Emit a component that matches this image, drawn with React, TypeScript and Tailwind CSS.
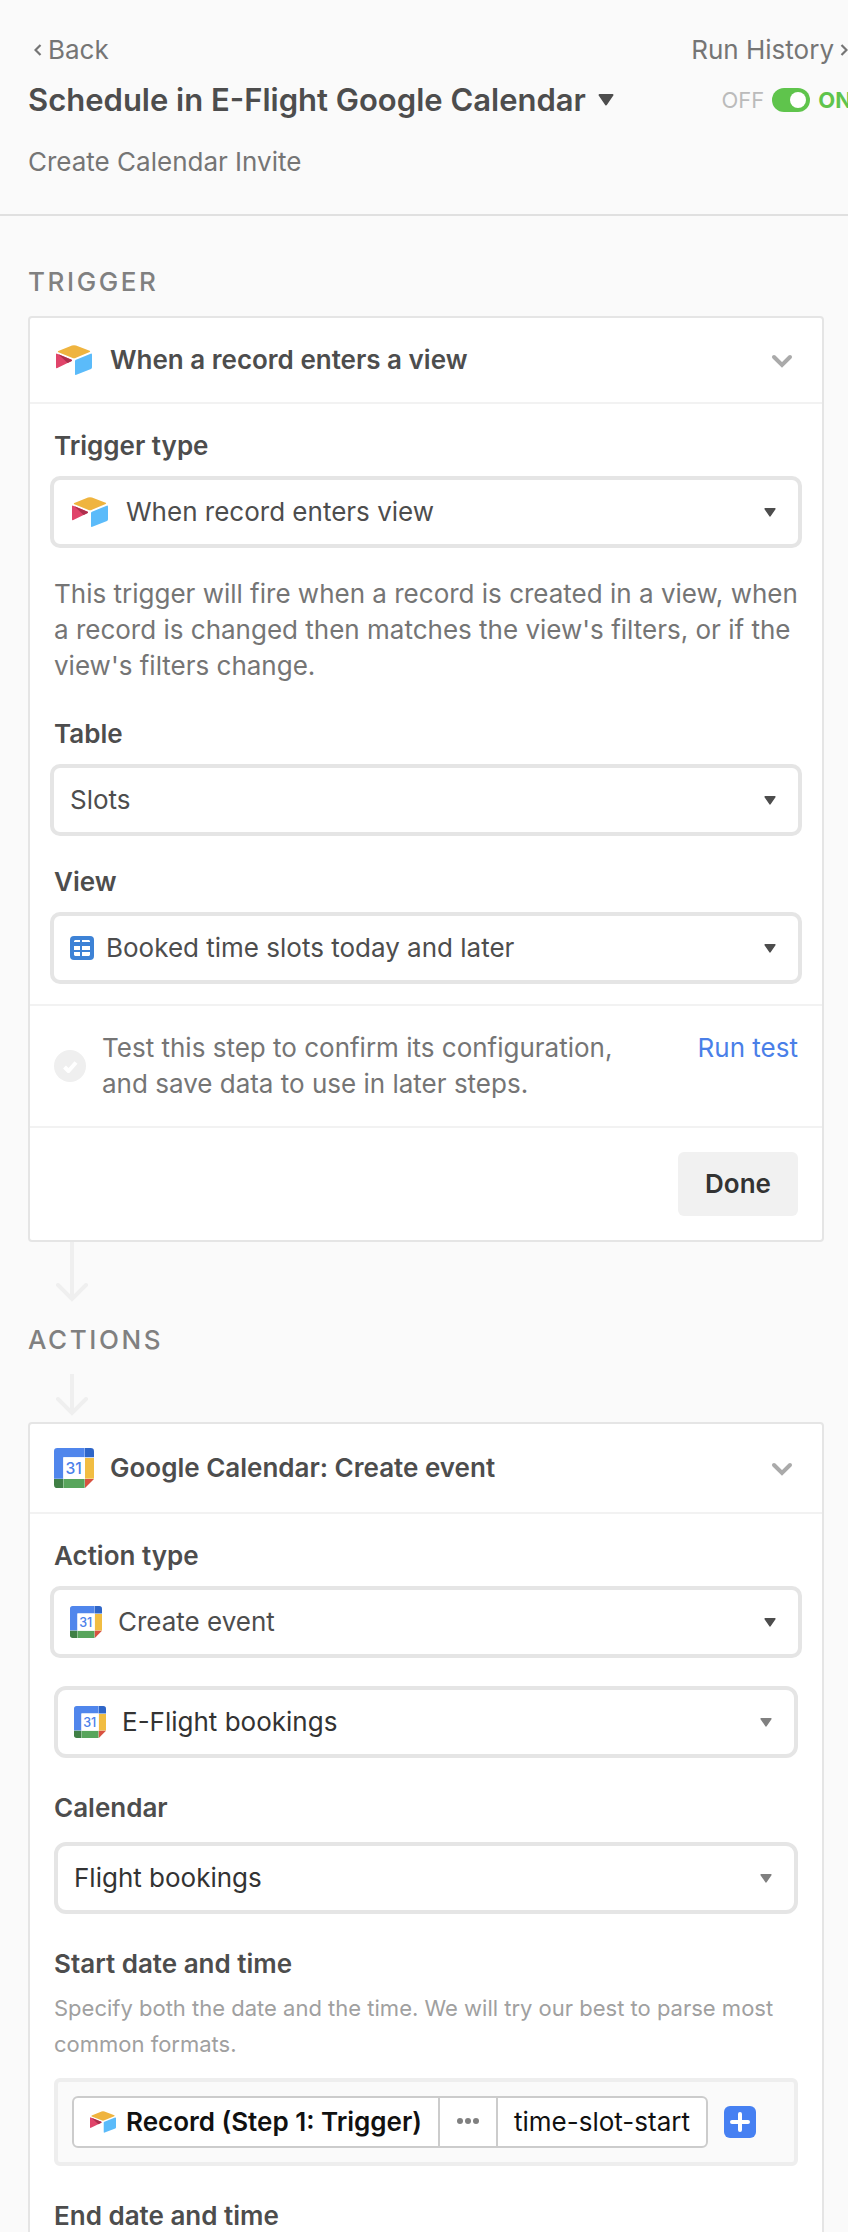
import { useState, type ReactNode } from 'react';
import clsx from 'clsx';

const AirtableIcon = ({ className }: { className?: string }) => (
  <svg viewBox="0 0 108 90" className={className} aria-hidden="true">
    <path d="M7 18 48 1.500Q54 -.5 60 1.500L101 17Q104 19 101 21L60 38Q54 41 48 38L7 22Q4 20 7 18Z" fill="#efb43f" />
    <path d="M0 28Q0 25 3 26L47 44Q49 46 47 48L4 69Q0 71 0 67Z" fill="#e0446a" />
    <path d="M6 27 47 44Q49 46 47 48L35 54Z" fill="#ad2f4d" />
    <path d="M57 48Q57 45 60 44L104 26Q108 25 108 29V67Q108 71 105 72L61 89Q57 91 57 87Z" fill="#5bbbfa" />
  </svg>
);

const CalendarIcon = ({ className }: { className?: string }) => (
  <svg viewBox="0 0 120 120" className={className} aria-hidden="true">
    <path d="M10 0H92V28H28V92H0V10Q0 0 10 0Z" fill="#5086ec" />
    <path d="M93 0H110Q120 0 120 10V28H93Z" fill="#2f66c8" />
    <path d="M93 30H120V92H93Z" fill="#f1bd42" />
    <path d="M28 93H92V120H28Z" fill="#58a55c" />
    <path d="M0 93H27V120H10Q0 120 0 110Z" fill="#3f7f45" />
    <path d="M93 93H120L93 120Z" fill="#d85140" />
    <path d="M28 28H92V92H28Z" fill="#fff" />
    <text x="59" y="78" textAnchor="middle" fontFamily="Inter, sans-serif" fontSize="47" fontWeight="500" fill="#4a80ea">
      31
    </text>
  </svg>
);

const GridIcon = ({ className }: { className?: string }) => (
  <svg viewBox="0 0 24 24" className={className} aria-hidden="true">
    <rect width="24" height="24" rx="4" fill="#3d82d6" />
    <path d="M5 4h5v2H4V5zM12 4h7l1 1v1h-8zM4 10h6v4H4zM12 10h8v4h-8zM4 16h6v4H5l-1-1zM12 16h8v3l-1 1h-7z" fill="#fff" />
  </svg>
);

const Caret = ({ className }: { className?: string }) => (
  <svg viewBox="0 0 16 12" className={className} aria-hidden="true">
    <path d="M1.500 1H14.500L8 10.500Z" fill="currentColor" stroke="currentColor" strokeWidth="2" strokeLinejoin="round" />
  </svg>
);

const SmallChevron = ({ className }: { className?: string }) => (
  <svg viewBox="0 0 8 12" className={className} fill="none" stroke="currentColor" strokeWidth="2.2" aria-hidden="true">
    <path d="M1.500 1 6.500 6 1.500 11" />
  </svg>
);

const FlowArrow = ({ height }: { height: number }) => (
  <svg
    width="32"
    height={height}
    viewBox={`0 0 32 ${height}`}
    className="ml-7 block"
    fill="none"
    stroke="#efefef"
    strokeWidth="4"
    aria-hidden="true"
  >
    <path d={`M16 0V${height - 3}`} />
    <path d={`M2 ${height - 17} 16 ${height - 3} 30 ${height - 17}`} strokeLinecap="round" />
  </svg>
);

interface SelectProps {
  id: string;
  value: string;
  icon?: ReactNode;
  tight?: boolean;
  nested?: boolean;
  label?: string;
}

const Select = ({ id, value, icon, tight, nested, label }: SelectProps) => (
  <div
    className={clsx(
      'flex h-18 items-center border-4 border-[#e5e5e5] bg-white pl-4 pr-[22px]',
      nested ? 'rounded-xl text-[#333]' : '-mx-1 rounded-[10px] text-[#4d4d4d]',
      tight ? 'gap-3' : 'gap-4'
    )}
  >
    {icon}
    <select id={id} aria-label={label} className="h-full min-w-0 flex-1 appearance-none bg-transparent outline-none">
      <option>{value}</option>
    </select>
    <Caret className={clsx('h-[9px] w-3 shrink-0', nested ? 'text-[#808080]' : 'text-[#4d4d4d]')} />
  </div>
);

const FieldLabel = ({ htmlFor, children }: { htmlFor: string; children: ReactNode }) => (
  <label htmlFor={htmlFor} className="block font-semibold text-[#4d4d4d]">
    {children}
  </label>
);

const StepHeader = ({ icon, title }: { icon: ReactNode; title: string }) => (
  <div className="flex items-center border-b-2 border-[#f2f2f2] p-6">
    {icon}
    <h3 className="ml-4 flex-1 font-semibold text-[#4d4d4d]">{title}</h3>
    <button type="button" aria-label={`Collapse ${title}`}>
      <svg viewBox="0 0 32 32" className="size-8" fill="none" stroke="#aaa" strokeWidth="4" strokeLinecap="round" aria-hidden="true">
        <path d="M8 13 16 21 24 13" />
      </svg>
    </button>
  </div>
);

const SectionTitle = ({ children }: { children: ReactNode }) => (
  <h2 className="font-medium tracking-widest text-[#808080]">{children}</h2>
);

const App = () => {
  const [enabled, setEnabled] = useState(true);

  return (
    <div className="h-screen overflow-hidden bg-[#fafafa] font-['Inter',sans-serif] text-[26px] leading-9 text-[#757575]">
      <header className="border-b-2 border-[#e0e0e0] pb-[34px] pl-7 pt-8">
        <div className="flex items-center justify-between">
          <a href="#back" className="flex items-center gap-1.5 pl-1.5">
            <SmallChevron className="h-3 w-2 rotate-180" />
            Back
          </a>
          <a href="#history" className="flex items-center gap-1.5">
            Run History
            <SmallChevron className="h-3 w-2" />
          </a>
        </div>
        <div className="-mr-1 mt-3 flex h-10 items-center justify-between whitespace-nowrap">
          <button type="button" className="flex items-center gap-3 text-[31px] font-semibold text-[#4d4d4d]">
            Schedule in E-Flight Google Calendar
            <Caret className="h-3 w-4" />
          </button>
          <label className="flex items-center gap-2 text-[22px]">
            <span className="text-[#bbb]">OFF</span>
            <input
              type="checkbox"
              checked={enabled}
              onChange={(e) => setEnabled(e.target.checked)}
              className="flex h-6 w-[38px] appearance-none items-center rounded-full bg-gray-300 px-1 before:size-4 before:rounded-full before:bg-white checked:justify-end checked:bg-[#5fc44c]"
            />
            <span className="font-bold text-[#5fc44c]">ON</span>
          </label>
        </div>
        <p className="mt-6">Create Calendar Invite</p>
      </header>

      <main className="px-7 pt-12 [&>h2]:mb-4">
        <SectionTitle>TRIGGER</SectionTitle>
        <section className="-mr-1 rounded-sm border-2 border-[#e5e5e5] bg-white">
          <StepHeader icon={<AirtableIcon className="mx-0.5 my-[3px] h-[30px] w-9" />} title="When a record enters a view" />
          <div className="px-6 pb-5 pt-6">
            <FieldLabel htmlFor="trigger-type">Trigger type</FieldLabel>
            <div className="mt-3">
              <Select id="trigger-type" value="When record enters view" icon={<AirtableIcon className="mx-0.5 h-[30px] w-9" />} />
            </div>
            <p className="-mr-2 mb-8 mt-7">
              This trigger will fire when a record is created in a view, when a record is changed then matches the
              view's filters, or if the view's filters change.
            </p>
            <FieldLabel htmlFor="table">Table</FieldLabel>
            <div className="mb-7 mt-3">
              <Select id="table" value="Slots" />
            </div>
            <FieldLabel htmlFor="view">View</FieldLabel>
            <div className="mt-3">
              <Select id="view" value="Booked time slots today and later" icon={<GridIcon className="size-6" />} tight />
            </div>
          </div>
          <div className="flex items-center gap-4 border-t-2 border-[#f2f2f2] p-6">
            <svg viewBox="0 0 32 32" className="size-8 shrink-0" aria-hidden="true">
              <circle cx="16" cy="16" r="16" fill="#efefef" />
              <path d="M10.500 17 14.500 21 22 12.500" fill="none" stroke="#fff" strokeWidth="4" strokeLinejoin="round" />
            </svg>
            <p className="flex-1 pr-10">Test this step to confirm its configuration, and save data to use in later steps.</p>
            <button type="button" className="self-start text-[#4a7fe8]">
              Run test
            </button>
          </div>
          <div className="flex justify-end border-t-2 border-[#f2f2f2] p-6">
            <button type="button" className="h-16 w-[120px] rounded-md bg-[#f1f1f1] font-semibold text-[#333]">
              Done
            </button>
          </div>
        </section>

        <div className="mb-5">
          <FlowArrow height={60} />
        </div>
        <SectionTitle>ACTIONS</SectionTitle>
        <div className="mb-1.5">
          <FlowArrow height={42} />
        </div>

        <section className="-mr-1 rounded-sm border-2 border-[#e5e5e5] bg-white">
          <StepHeader icon={<CalendarIcon className="size-10" />} title="Google Calendar: Create event" />
          <div className="px-6 pb-5 pt-6">
            <FieldLabel htmlFor="action-type">Action type</FieldLabel>
            <div className="mb-7 mt-3">
              <Select id="action-type" value="Create event" icon={<CalendarIcon className="size-8" />} />
            </div>
            <Select id="account" label="Account" value="E-Flight bookings" icon={<CalendarIcon className="size-8" />} nested />
            <div className="mb-4 mt-8">
              <FieldLabel htmlFor="calendar">Calendar</FieldLabel>
            </div>
            <Select id="calendar" value="Flight bookings" nested />

            <div className="mb-2 mt-8">
              <FieldLabel htmlFor="start">Start date and time</FieldLabel>
            </div>
            <p className="mb-4 text-[22px] text-[#a0a0a0]">
              Specify both the date and the time. We will try our best to parse most common formats.
            </p>
            <div className="flex items-center gap-4 rounded-md border-4 border-[#eee] bg-[#fafafa] p-3.5">
              <button
                id="start"
                type="button"
                className="flex h-13 items-stretch whitespace-nowrap rounded-md border-2 border-[#ccc] bg-white text-[#111]"
              >
                <span className="flex items-center gap-2.5 px-4 font-semibold">
                  <AirtableIcon className="h-[22px] w-[26px]" />
                  Record (Step 1: Trigger)
                </span>
                <span className="flex items-center border-x-2 border-[#ccc] px-4">
                  <svg viewBox="0 0 24 8" className="h-2 w-6" fill="#808080" aria-hidden="true">
                    <circle cx="4" cy="3" r="3" />
                    <circle cx="12" cy="3" r="3" />
                    <circle cx="20" cy="3" r="3" />
                  </svg>
                </span>
                <span className="flex items-center px-4">time-slot-start</span>
              </button>
              <button type="button" aria-label="Insert value" className="size-8 shrink-0 rounded-md bg-[#4680f2]">
                <svg viewBox="0 0 32 32" className="size-8" stroke="#fff" strokeWidth="4" strokeLinecap="round" aria-hidden="true">
                  <path d="M16 8V24M8 16H24" />
                </svg>
              </button>
            </div>
            <h4 className="mt-8 font-semibold text-[#4d4d4d]">End date and time</h4>
          </div>
        </section>
      </main>
    </div>
  );
};

export default App;
